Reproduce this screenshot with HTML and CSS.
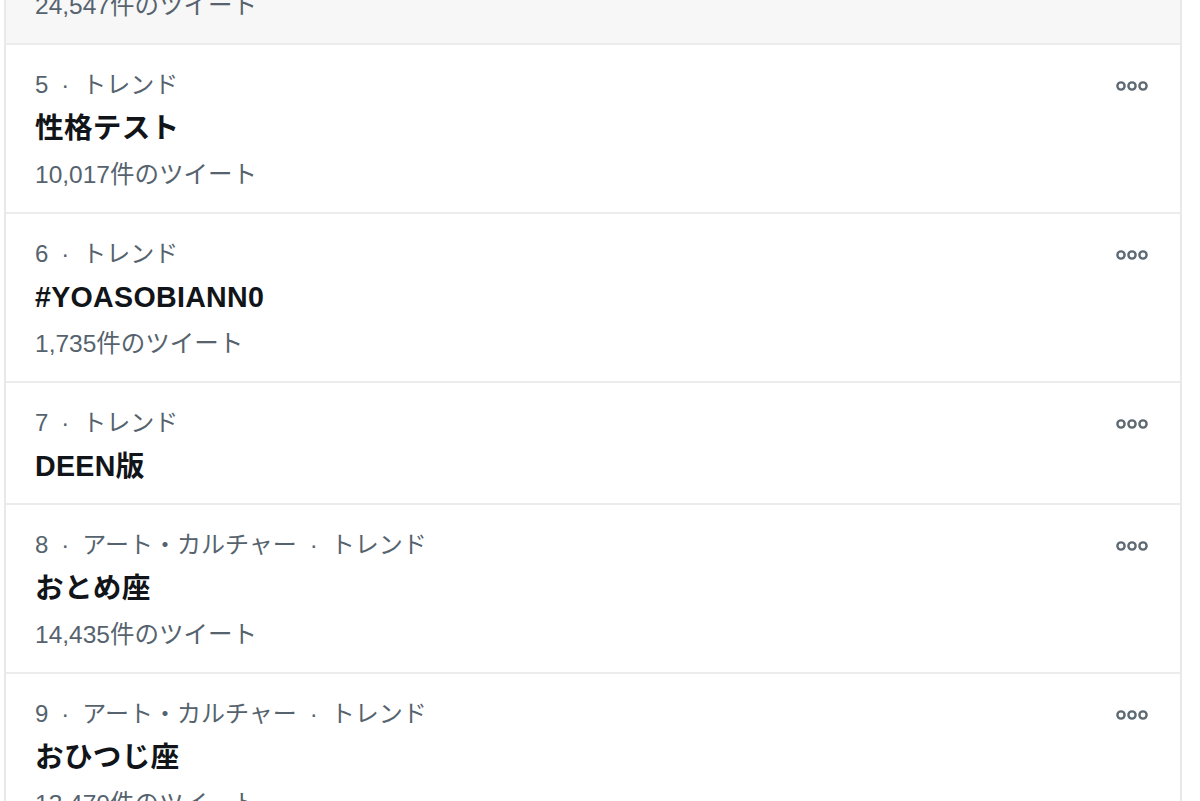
FILE: index.html
```html
<!DOCTYPE html>
<html lang="ja">
<head>
<meta charset="utf-8">
<title>トレンド</title>
<link rel="stylesheet" href="styles.css">
</head>
<body>
<div class="list">
  <div class="row row-partial">
    <div class="count">24,547件のツイート</div>
  </div>
  <div class="row">
    <div class="body">
      <div class="meta">5<span class="sep">·</span>トレンド</div>
      <div class="title">性格テスト</div>
      <div class="count">10,017件のツイート</div>
    </div>
    <span class="more"><svg width="32" height="12" viewBox="0 0 32 12"><circle cx="5" cy="6" r="3.6"/><circle cx="16" cy="6" r="3.6"/><circle cx="27" cy="6" r="3.6"/></svg></span>
  </div>
  <div class="row">
    <div class="body">
      <div class="meta">6<span class="sep">·</span>トレンド</div>
      <div class="title">#YOASOBIANN0</div>
      <div class="count">1,735件のツイート</div>
    </div>
    <span class="more"><svg width="32" height="12" viewBox="0 0 32 12"><circle cx="5" cy="6" r="3.6"/><circle cx="16" cy="6" r="3.6"/><circle cx="27" cy="6" r="3.6"/></svg></span>
  </div>
  <div class="row">
    <div class="body">
      <div class="meta">7<span class="sep">·</span>トレンド</div>
      <div class="title">DEEN版</div>
    </div>
    <span class="more"><svg width="32" height="12" viewBox="0 0 32 12"><circle cx="5" cy="6" r="3.6"/><circle cx="16" cy="6" r="3.6"/><circle cx="27" cy="6" r="3.6"/></svg></span>
  </div>
  <div class="row">
    <div class="body">
      <div class="meta">8<span class="sep">·</span>アート・カルチャー<span class="sep">·</span>トレンド</div>
      <div class="title">おとめ座</div>
      <div class="count">14,435件のツイート</div>
    </div>
    <span class="more"><svg width="32" height="12" viewBox="0 0 32 12"><circle cx="5" cy="6" r="3.6"/><circle cx="16" cy="6" r="3.6"/><circle cx="27" cy="6" r="3.6"/></svg></span>
  </div>
  <div class="row">
    <div class="body">
      <div class="meta">9<span class="sep">·</span>アート・カルチャー<span class="sep">·</span>トレンド</div>
      <div class="title">おひつじ座</div>
      <div class="count">13,470件のツイート</div>
    </div>
    <span class="more"><svg width="32" height="12" viewBox="0 0 32 12"><circle cx="5" cy="6" r="3.6"/><circle cx="16" cy="6" r="3.6"/><circle cx="27" cy="6" r="3.6"/></svg></span>
  </div>
</div>
</body>
</html>
```
FILE: styles.css
```css
html, body {
  margin: 0;
  padding: 0;
  background: #ffffff;
  overflow: hidden;
}
body {
  font-family: "Liberation Sans", "Noto Sans CJK JP", sans-serif;
  width: 1200px;
  height: 801px;
}
.list {
  margin: -18px 0 0 4px;
  width: 1174px;
  border-left: 2px solid #e9e9e9;
  border-right: 2px solid #e9e9e9;
}
.row {
  display: flex;
  align-items: flex-start;
  justify-content: space-between;
  padding: 20px 32px 14px 29px;
  border-bottom: 2px solid #ececec;
}
.row-partial {
  background: #f7f7f7;
  padding-top: 0;
}
.body {
  display: flex;
  flex-direction: column;
}
.meta {
  font-size: 24px;
  line-height: 40px;
  color: #56636e;
  white-space: nowrap;
}
.sep {
  display: inline-block;
  width: 34px;
  text-align: center;
}
.title {
  font-size: 28.6px;
  line-height: 46px;
  font-weight: 700;
  color: #111418;
  letter-spacing: 0.3px;
}
.count {
  font-size: 24.5px;
  line-height: 47px;
  color: #56636e;
  white-space: nowrap;
}
.more {
  display: flex;
  margin-top: 15px;
}
.more svg circle {
  fill: none;
  stroke: #5e6a73;
  stroke-width: 2.4;
}
```
